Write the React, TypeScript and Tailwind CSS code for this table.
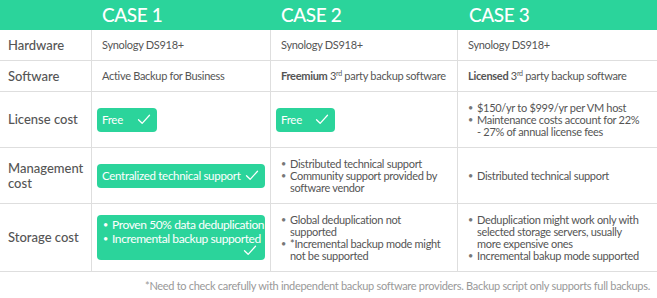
import type { ReactNode } from "react";

const font = { fontFamily: "Lato, 'Noto Sans', sans-serif" };

function Check({ className = "" }: { className?: string }) {
    return (
        <svg viewBox="0 0 16 13" className={className} fill="none" aria-hidden>
            <path d="M1.5 6.8 L5.8 11 L14.5 1.5" stroke="white" strokeWidth="1.5" strokeLinecap="round" strokeLinejoin="round" />
        </svg>
    );
}

function Bullets({ items, light = false, lh = "leading-[12px]" }: { items: ReactNode[]; light?: boolean; lh?: string }) {
    return (
        <ul>
            {items.map((it, i) => (
                <li key={i} className={`flex whitespace-nowrap ${lh}`}>
                    <span className={`w-[9px] shrink-0 text-[9px] ${light ? "text-white" : "text-[#777]"}`}>•</span>
                    <span>{it}</span>
                </li>
            ))}
        </ul>
    );
}

function Label({ children }: { children: ReactNode }) {
    return (
        <div className="flex items-center pl-[8px] text-[13px] leading-[15px] font-medium text-[#555]">
            <span>{children}</span>
        </div>
    );
}

function Cell({ children, tight = false }: { children: ReactNode; tight?: boolean }) {
    return (
        <div
            className={`flex items-center whitespace-nowrap border-l border-[#dedede] text-[11px] tracking-[-0.3px] text-[#555] ${
                tight ? "pl-[5px]" : "pl-[10px]"
            }`}
        >
            {children}
        </div>
    );
}

function Sup({ children }: { children: ReactNode }) {
    return <sup className="text-[7px]">{children}</sup>;
}

export default function App() {
    const row = "grid grid-cols-[91px_179px_187px_1fr] border-b border-[#dedede]";
    return (
        <div className="h-[298px] w-[657px] bg-white" style={font}>
            <div className="grid h-[30px] grid-cols-[91px_179px_187px_1fr] bg-[#2bd49b] text-[19px] tracking-[-0.4px] font-medium text-white">
                <div />
                <div className="flex items-center pl-[11px]">CASE 1</div>
                <div className="flex items-center pl-[11px]">CASE 2</div>
                <div className="flex items-center pl-[12px]">CASE 3</div>
            </div>

            <div className={`${row} h-[31px]`}>
                <Label>Hardware</Label>
                <Cell>Synology DS918+</Cell>
                <Cell>Synology DS918+</Cell>
                <Cell>Synology DS918+</Cell>
            </div>

            <div className={`${row} h-[31px]`}>
                <Label>Software</Label>
                <Cell>Active Backup for Business</Cell>
                <Cell>
                    <span>
                        <b className="font-bold">Freemium</b> 3<Sup>rd</Sup> party backup software
                    </span>
                </Cell>
                <Cell>
                    <span>
                        <b className="font-bold">Licensed</b> 3<Sup>rd</Sup> party backup software
                    </span>
                </Cell>
            </div>

            <div className={`${row} h-[56px]`}>
                <Label>License cost</Label>
                <Cell tight>
                    <div className="flex h-[24px] w-[60px] items-center justify-between rounded-[4px] bg-[#2bd49b] pl-[5px] pr-[6px] text-[11.5px] text-white">
                        <span>Free</span>
                        <Check className="h-[11px] w-[14px]" />
                    </div>
                </Cell>
                <Cell tight>
                    <div className="flex h-[24px] w-[59px] items-center justify-between rounded-[4px] bg-[#2bd49b] pl-[5px] pr-[6px] text-[11.5px] text-white">
                        <span>Free</span>
                        <Check className="h-[11px] w-[14px]" />
                    </div>
                </Cell>
                <Cell>
                    <Bullets
                        items={[
                            "$150/yr to $999/yr per VM host",
                            <>
                                Maintenance costs account for 22%
                                <br />- 27% of annual license fees
                            </>,
                        ]}
                    />
                </Cell>
            </div>

            <div className={`${row} h-[56px]`}>
                <Label>
                    Management
                    <br />
                    cost
                </Label>
                <Cell tight>
                    <div className="flex h-[24px] w-[168px] items-center justify-between rounded-[4px] bg-[#2bd49b] pl-[5px] pr-[6px] text-[11.5px] text-white">
                        <span>Centralized technical support</span>
                        <Check className="h-[11px] w-[14px]" />
                    </div>
                </Cell>
                <Cell>
                    <Bullets
                        items={[
                            "Distributed technical support",
                            <>
                                Community support provided by
                                <br />
                                software vendor
                            </>,
                        ]}
                    />
                </Cell>
                <Cell>
                    <Bullets items={["Distributed technical support"]} />
                </Cell>
            </div>

            <div className={`${row} h-[68px]`}>
                <Label>Storage cost</Label>
                <Cell tight>
                    <div className="relative h-[45px] w-[168px] rounded-[4px] bg-[#2bd49b] pl-[6px] pt-[3px] text-[12px] tracking-[-0.4px] text-white">
                        <Bullets
                            light
                            lh="leading-[14px]"
                            items={["Proven 50% data deduplication", "Incremental backup supported"]}
                        />
                        <Check className="absolute bottom-[4px] right-[8px] h-[11px] w-[14px]" />
                    </div>
                </Cell>
                <Cell>
                    <Bullets
                        items={[
                            <>
                                Global deduplication not
                                <br />
                                supported
                            </>,
                            <>
                                *Incremental backup mode might
                                <br />
                                not be supported
                            </>,
                        ]}
                    />
                </Cell>
                <Cell>
                    <Bullets
                        items={[
                            <>
                                Deduplication might work only with
                                <br />
                                selected storage servers, usually
                                <br />
                                more expensive ones
                            </>,
                            "Incremental bakup mode supported",
                        ]}
                    />
                </Cell>
            </div>

            <div className="whitespace-nowrap pr-[7px] pt-[6px] text-right text-[11px] tracking-[-0.3px] text-[#999]">
                *Need to check carefully with independent backup software providers. Backup script only supports full backups.
            </div>
        </div>
    );
}
